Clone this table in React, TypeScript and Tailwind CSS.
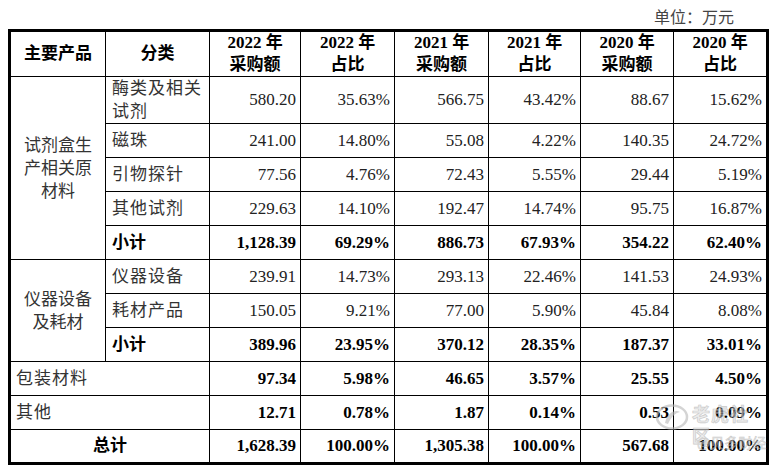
const serif = "font-['Liberation_Serif','Noto_Sans_CJK_SC',serif]";

type Row = {
  name: string;
  values: string[];
  bold?: boolean;
};

const reagentRows: Row[] = [
  { name: "酶类及相关试剂", values: ["580.20", "35.63%", "566.75", "43.42%", "88.67", "15.62%"] },
  { name: "磁珠", values: ["241.00", "14.80%", "55.08", "4.22%", "140.35", "24.72%"] },
  { name: "引物探针", values: ["77.56", "4.76%", "72.43", "5.55%", "29.44", "5.19%"] },
  { name: "其他试剂", values: ["229.63", "14.10%", "192.47", "14.74%", "95.75", "16.87%"] },
  { name: "小计", values: ["1,128.39", "69.29%", "886.73", "67.93%", "354.22", "62.40%"], bold: true },
];

const deviceRows: Row[] = [
  { name: "仪器设备", values: ["239.91", "14.73%", "293.13", "22.46%", "141.53", "24.93%"] },
  { name: "耗材产品", values: ["150.05", "9.21%", "77.00", "5.90%", "45.84", "8.08%"] },
  { name: "小计", values: ["389.96", "23.95%", "370.12", "28.35%", "187.37", "33.01%"], bold: true },
];

const otherRows: Row[] = [
  { name: "包装材料", values: ["97.34", "5.98%", "46.65", "3.57%", "25.55", "4.50%"], bold: true },
  { name: "其他", values: ["12.71", "0.78%", "1.87", "0.14%", "0.53", "0.09%"], bold: true },
];

const total: Row = {
  name: "总计",
  values: ["1,628.39", "100.00%", "1,305.38", "100.00%", "567.68", "100.00%"],
  bold: true,
};

const headers = [
  ["2022 年", "采购额"],
  ["2022 年", "占比"],
  ["2021 年", "采购额"],
  ["2021 年", "占比"],
  ["2020 年", "采购额"],
  ["2020 年", "占比"],
];

const cell = "border border-black p-0";

function Values({ row }: { row: Row }) {
  return (
    <>
      {row.values.map((v, i) => (
        <td
          key={i}
          className={`${cell} text-right pr-[4px] ${row.bold ? "font-bold text-black" : "text-[#222]"}`}
        >
          {v}
        </td>
      ))}
    </>
  );
}

// semi-transparent stamp in the lower right corner
function Watermark() {
  return (
    <div className="absolute left-[652px] top-[400px] w-[115px] h-[56px] pointer-events-none opacity-60">
      <svg className="absolute left-[2px] top-[3px]" width="36" height="28" viewBox="0 0 36 28">
        <ellipse cx="18" cy="14" rx="15" ry="11.5" fill="none" stroke="#b8b8b8" strokeWidth="2.5" />
        <path d="M11 20 C 13 9, 22 6, 26 9 C 21 10, 17 14, 14 21 Z" fill="#b8b8b8" />
      </svg>
      <div className="absolute left-[40px] top-[2px] text-[18px] leading-[22px] font-bold tracking-[1px] text-[#e0e0e0] font-['Noto_Sans_CJK_SC',sans-serif] [-webkit-text-stroke:0.7px_#a8a8a8]">
        老虎社区
      </div>
      <div className="absolute left-[45px] top-[33px] text-[14px] leading-[18px] text-[#dddddd] font-['Noto_Sans_CJK_SC',sans-serif] [-webkit-text-stroke:0.5px_#a8a8a8]">
        @贝多财经
      </div>
    </div>
  );
}

export default function App() {
  return (
    <div className={`relative w-[774px] h-[471px] bg-white ${serif} text-[17px]`}>
      <div className="h-[29px] flex items-center justify-end pr-[40px] pt-[2px] text-[16px] text-[#444] font-['Noto_Sans_CJK_SC',sans-serif]">
        单位：万元
      </div>
      <table className="ml-[8px] border-collapse border-[3px] border-black table-fixed w-[758px] leading-[22px]">
        <colgroup>
          <col className="w-[96px]" />
          <col className="w-[104px]" />
          <col className="w-[91px]" />
          <col className="w-[94px]" />
          <col className="w-[94px]" />
          <col className="w-[92px]" />
          <col className="w-[93px]" />
          <col className="w-[94px]" />
        </colgroup>
        <tbody>
          <tr className="h-[46px] font-bold text-black">
            <td className={`${cell} text-center`}>主要产品</td>
            <td className={`${cell} text-center`}>分类</td>
            {headers.map(([a, b], i) => (
              <td key={i} className={`${cell} text-center`}>
                {a}
                <br />
                {b}
              </td>
            ))}
          </tr>
          {reagentRows.map((row, i) => (
            <tr key={row.name + i} className={i === 0 ? "h-[46px]" : "h-[34px]"}>
              {i === 0 && (
                <td rowSpan={5} className={`${cell} text-center px-[10px] leading-[23px] text-[#333]`}>
                  试剂盒生产相关原材料
                </td>
              )}
              <td
                className={`${cell} text-left pl-[6px] pr-[4px] leading-[23px] ${row.bold ? "font-bold text-black" : "text-[#333] tracking-[1px]"}`}
              >
                {row.name}
              </td>
              <Values row={row} />
            </tr>
          ))}
          {deviceRows.map((row, i) => (
            <tr key={row.name + i} className="h-[34px]">
              {i === 0 && (
                <td rowSpan={3} className={`${cell} text-center px-[10px] leading-[23px] text-[#333]`}>
                  仪器设备及耗材
                </td>
              )}
              <td
                className={`${cell} text-left pl-[6px] ${row.bold ? "font-bold text-black" : "text-[#333] tracking-[1px]"}`}
              >
                {row.name}
              </td>
              <Values row={row} />
            </tr>
          ))}
          {otherRows.map((row) => (
            <tr key={row.name} className="h-[34px]">
              <td colSpan={2} className={`${cell} text-left pl-[5px] text-[#333] tracking-[1px]`}>
                {row.name}
              </td>
              <Values row={row} />
            </tr>
          ))}
          <tr className="h-[34px]">
            <td colSpan={2} className={`${cell} text-center font-bold text-black`}>
              {total.name}
            </td>
            <Values row={total} />
          </tr>
        </tbody>
      </table>
      <Watermark />
    </div>
  );
}
